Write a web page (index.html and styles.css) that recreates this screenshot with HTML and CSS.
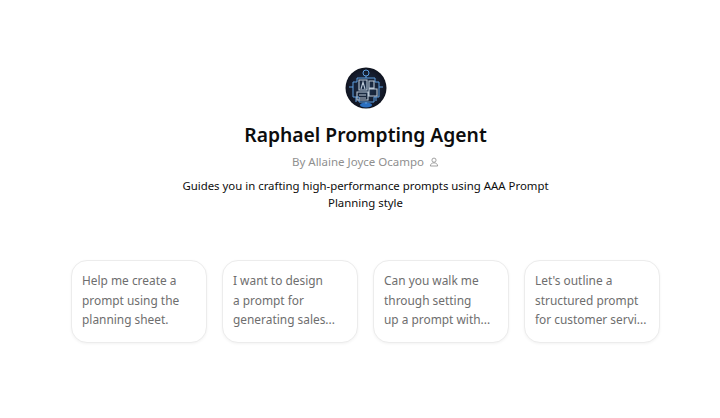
FILE: index.html
```html
<!DOCTYPE html>
<html lang="en">
<head>
<meta charset="utf-8">
<title>Raphael Prompting Agent</title>
<link rel="stylesheet" href="styles.css">
</head>
<body>
<main class="page">
  <section class="intro">
    <svg class="avatar" viewBox="0 0 42 42" aria-hidden="true">
      <defs>
        <radialGradient id="bg" cx="50%" cy="50%" r="55%">
          <stop offset="0" stop-color="#1d3350"/>
          <stop offset="0.75" stop-color="#141a2a"/>
          <stop offset="1" stop-color="#0c0f18"/>
        </radialGradient>
      </defs>
      <circle cx="21" cy="21" r="20.500" fill="url(#bg)"/>
      <ellipse cx="21" cy="38" rx="6" ry="2.500" fill="#2b6fc0"/>
      <g fill="none" stroke="#5f9fe0" stroke-width="1">
        <circle cx="21" cy="6" r="3"/>
        <path d="M12 11h18v4h4v15h-5v5H14v-5H8V15h4z"/>
        <path d="M21 9v2M8 20H4M34 20h4M11 30v5M31 30v4M21 35v2"/>
      </g>
      <g fill="none" stroke="#b9c6d4" stroke-width="1.100">
        <path d="M14 13h8v10h-8zM16 22l2-7 2 7M24 14h5v7h-5zM24 22h8v7h-8zM12 25h11v8H12zM14 28h7M14 31h7"/>
      </g>
    </svg>
    <h1 class="title">Raphael Prompting Agent</h1>
    <p class="byline">
      <span>By Allaine Joyce Ocampo</span>
      <svg class="user-icon" viewBox="0 0 12 12" aria-hidden="true">
        <circle cx="6" cy="3.800" r="2.500"/>
        <path d="M1.600 10.800c.3-2.600 2-3.800 4.400-3.800s4.100 1.200 4.400 3.800z"/>
      </svg>
    </p>
    <p class="description">Guides you in crafting high-performance prompts using AAA Prompt Planning style</p>
  </section>
  <section class="starters">
    <div class="card">Help me create a<br>prompt using the<br>planning sheet.</div>
    <div class="card">I want to design<br>a prompt for<br>generating sales...</div>
    <div class="card">Can you walk me<br>through setting<br>up a prompt with...</div>
    <div class="card">Let's outline a<br>structured prompt<br>for customer servi...</div>
  </section>
</main>
</body>
</html>
```

FILE: styles.css
```css
* { box-sizing: border-box; }
html, body { margin: 0; height: 100%; background: #fff; }
body {
  font-family: "Noto Sans", "Open Sans", sans-serif;
  color: #0d0d0d;
  overflow: hidden;
}
.page {
  display: flex;
  flex-direction: column;
  align-items: center;
  padding: 67px 60px 0 71px;
}
.intro {
  display: flex;
  flex-direction: column;
  align-items: center;
  text-align: center;
  width: 380px;
}
.avatar {
  width: 42px;
  height: 42px;
  display: block;
}
.title {
  margin: 12px 0 0;
  font-size: 19.300px;
  line-height: 28px;
  font-weight: 600;
  color: #0d0d0d;
}
.byline {
  display: flex;
  align-items: center;
  gap: 5px;
  margin: 4px 0 0;
  font-size: 11.500px;
  line-height: 18px;
  color: #8f8f8f;
}
.user-icon {
  width: 10px;
  height: 10px;
  fill: none;
  stroke: #8f8f8f;
  stroke-width: 1;
}
.description {
  margin: 6px 0 0;
  font-size: 11.400px;
  line-height: 17px;
  color: #0d0d0d;
}
.starters {
  display: grid;
  grid-template-columns: repeat(4, 1fr);
  gap: 15px;
  width: 100%;
  margin-top: 49px;
}
.card {
  height: 83px;
  padding: 10px 10px 0 10px;
  border: 1px solid #ececec;
  border-radius: 16px;
  background: #fff;
  box-shadow: 0 1px 3px rgba(0, 0, 0, 0.05);
  font-size: 11.900px;
  line-height: 19.500px;
  color: #6e6e6e;
  white-space: nowrap;
}
```
